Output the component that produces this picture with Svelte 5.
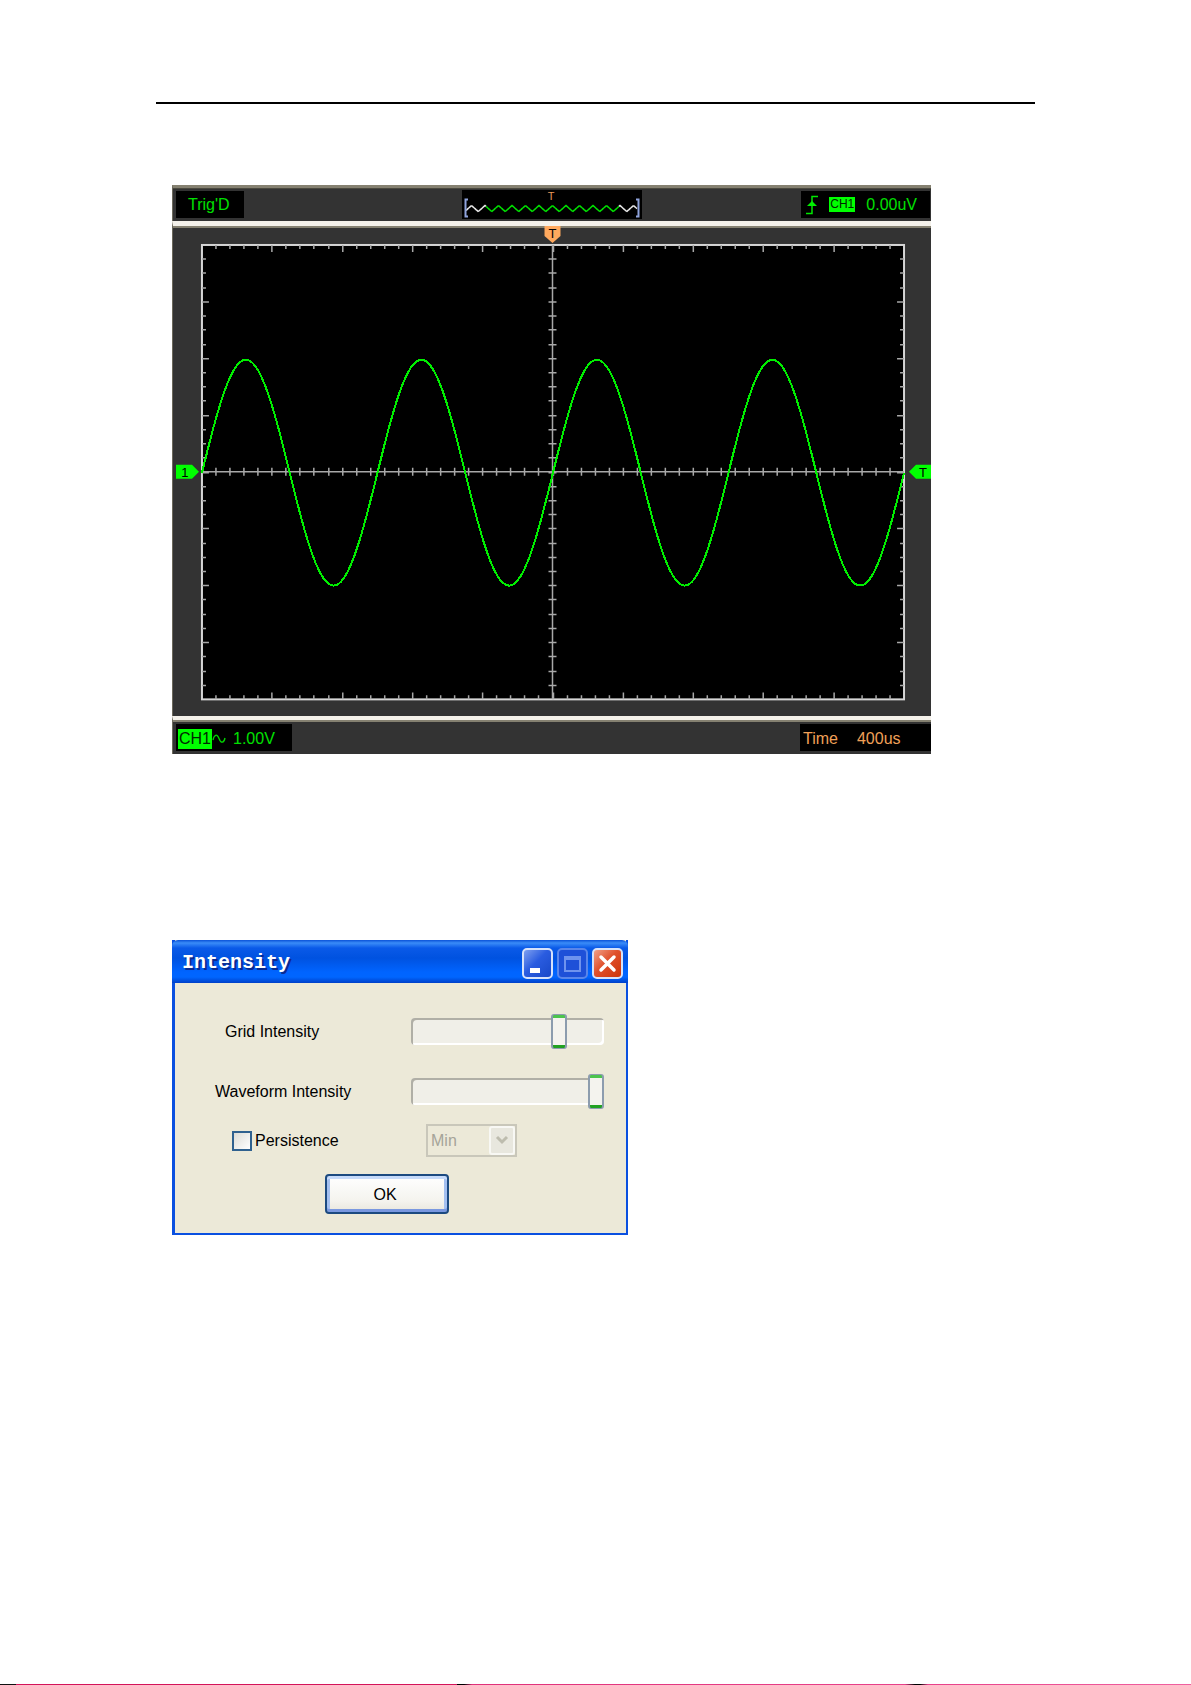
<script lang="ts">
const plot = { left: 29, top: 19, width: 703, height: 455 };
const columns = 10;
const rows = 8;
const stepX = plot.width / (columns * 5);
const stepY = plot.height / (rows * 4);
const midX = Math.floor(plot.left + plot.width / 2);
const midY = Math.floor(plot.top + plot.height / 2);
const right = plot.left + plot.width;
const bottom = plot.top + plot.height;

const ticksX = Array.from({ length: columns * 5 - 1 }, (_, i) => ({
	x: Math.round(plot.left + (i + 1) * stepX),
	size: (i + 1) % 5 === 0 ? 7 : 4,
}));
const ticksY = Array.from({ length: rows * 4 - 1 }, (_, i) => ({
	y: Math.round(plot.top + (i + 1) * stepY),
	size: (i + 1) % 4 === 0 ? 7 : 4,
}));

const amplitude = 113;
const cycles = 4;
const wave = Array.from({ length: plot.width + 1 }, (_, x) => {
	const y = midY + 1 - amplitude * Math.sin((x / plot.width) * cycles * 2 * Math.PI);
	return `${plot.left + x},${y.toFixed(1)}`;
}).join(" ");

// zigzag of the record preview, peaks every 13.5 units
function zigzag(from: number, to: number) {
	const points = [];
	for (let x = from; x <= to; x += 1) {
		const phase = (((x - 9.5) % 13.5) + 13.5) % 13.5;
		points.push(`${x},${(15.5 + Math.min(phase, 13.5 - phase) * 0.9).toFixed(1)}`);
	}
	return points.join(" ");
}

let gridIntensity = $state(79);
let waveformIntensity = $state(100);
let persistence = $state(false);
</script>

<main class="page">
	<hr class="rule" />

	<section class="scope" aria-label="Oscilloscope">
		<header class="bar">
			<div class="readout status">Trig'D</div>
			<svg class="preview" width="180" height="29" viewBox="0 0 180 29">
				<rect width="180" height="29" fill="#000" />
				<g fill="none" stroke-width="1.5">
					<polyline points={zigzag(4, 24)} stroke="#e8e8e8" />
					<polyline points={zigzag(24, 157)} stroke="#00e000" />
					<polyline points={zigzag(157, 175)} stroke="#e8e8e8" />
				</g>
				<path d="M6 9.5H3.5V26.5H6M174 9.5h2.500v17H174" fill="none" stroke="#8fa3dc" stroke-width="2" />
				<text x="89" y="10" class="preview-mark">T</text>
			</svg>
			<div class="readout trigger">
				<svg width="12" height="20" viewBox="0 0 12 20">
					<path d="M0 18.500H6V1.500H12" fill="none" stroke="#00e800" stroke-width="1.500" />
					<path d="M6 6l5 5H1z" fill="#00f000" />
				</svg>
				<span class="badge small">CH1</span>
				<span>0.00uV</span>
			</div>
		</header>

		<svg class="screen" viewBox="0 0 759 491">
			<rect x={plot.left} y={plot.top} width={plot.width} height={plot.height} fill="#000" stroke="#d6d6d6" stroke-width="2" />
			<g class="ticks">
				{#each ticksX as tick}
					<path d="M{tick.x} {plot.top}v{tick.size}M{tick.x} {bottom}v-{tick.size}M{tick.x} {midY - 4}v8" />
				{/each}
				{#each ticksY as tick}
					<path d="M{plot.left} {tick.y}h{tick.size}M{right} {tick.y}h-{tick.size}M{midX - 4} {tick.y}h8" />
				{/each}
				<path d="M{plot.left} {midY}H{right}M{midX} {plot.top}V{bottom}" />
			</g>
			<polyline class="wave" points={wave} />

			<path d="M372 0h16v10l-8 7-8-7z" fill="#ffa95e" />
			<text x="380" y="12" class="marker">T</text>
			<path d="M3 239h16l7 7-7 7H3z" fill="#00ff00" />
			<text x="12" y="251" class="marker">1</text>
			<path d="M759 239h-15l-7 7 7 7h15z" fill="#00ff00" />
			<text x="751" y="251" class="marker">T</text>
		</svg>

		<footer class="bar">
			<div class="readout channel">
				<span class="badge">CH1</span>
				<svg width="14" height="12" viewBox="0 0 14 12">
					<path d="M1 7C2 2 5 0 7 5.500S12 10 13 5" fill="none" stroke="#00d800" stroke-width="1.300" />
				</svg>
				<span class="volts">1.00V</span>
			</div>
			<div class="readout time">
				<span>Time</span>
				<span>400us</span>
			</div>
		</footer>
	</section>

	<section class="dialog" aria-labelledby="dialog-title">
		<header class="titlebar">
			<h2 id="dialog-title">Intensity</h2>
			<button class="caption" aria-label="Minimize">
				<svg viewBox="0 0 27 27"><path d="M6 18h10v5H6z" fill="#fff" /></svg>
			</button>
			<button class="caption disabled" aria-label="Maximize" disabled>
				<svg viewBox="0 0 27 27"><path d="M6 7h15v14H6zM6 9h15" fill="none" stroke="#6f93ee" stroke-width="2" /></svg>
			</button>
			<button class="caption close" aria-label="Close">
				<svg viewBox="0 0 27 27"><path d="M7 7l13 13M20 7L7 20" stroke="#fff" stroke-width="3.500" stroke-linecap="round" /></svg>
			</button>
		</header>

		<form class="settings" onsubmit={(e) => e.preventDefault()}>
			<div class="row">
				<label class="label-grid" for="grid-intensity">Grid Intensity</label>
				<input id="grid-intensity" type="range" min="0" max="100" bind:value={gridIntensity} />
			</div>
			<div class="row">
				<label class="label-wave" for="waveform-intensity">Waveform Intensity</label>
				<input id="waveform-intensity" type="range" min="0" max="100" bind:value={waveformIntensity} />
			</div>
			<div class="row compact">
				<label class="check">
					<input type="checkbox" bind:checked={persistence} />
					Persistence
				</label>
				<div class="combo">
					<select aria-label="Persistence time" disabled={!persistence}>
						<option>Min</option>
					</select>
					<span class="arrow">
						<svg width="14" height="10" viewBox="0 0 14 10"><path d="M2 2l5 5 5-5" fill="none" stroke="#bdbcae" stroke-width="3" /></svg>
					</span>
				</div>
			</div>
			<button class="ok">OK</button>
		</form>
	</section>

	<div class="edge"></div>
</main>

<style>
	:global(body) {
		background: #fff;
	}

	.page {
		box-sizing: border-box;
		display: flex;
		flex-direction: column;
		min-height: 100vh;
		padding-top: 102px;
		font-family: "Liberation Sans", Arial, sans-serif;
		font-size: 16px;
		line-height: 20px;
		color: #000;
	}

	.rule {
		height: 2px;
		margin: 0 156px 81px;
		border: none;
		background: #000;
	}

	.scope {
		box-sizing: border-box;
		width: calc(100% - 344px);
		max-width: 759px;
		margin-left: 172px;
		background: #333;
	}

	.bar {
		box-sizing: border-box;
		display: flex;
		align-items: center;
		height: 36px;
		padding-left: 3px;
		border-top: 3px solid #858171;
		border-left: 1px solid #6b685b;
		box-shadow: inset 0 1px #4a493f;
	}

	.readout {
		box-sizing: border-box;
		display: flex;
		align-items: center;
		height: 27px;
		background: #000;
		color: #00e000;
	}

	.status {
		width: 68px;
		padding-left: 12px;
	}

	.preview {
		margin: 0 auto 0 218px;
	}

	.preview-mark {
		fill: #e8995a;
		font-size: 11px;
		text-anchor: middle;
	}

	.trigger {
		gap: 11px;
		padding: 0 13px 0 5px;
		margin-right: 1px;
	}

	.badge {
		padding: 0 1px;
		background: #00ff00;
		color: #002800;
	}

	.badge.small {
		font-size: 12px;
		line-height: 15px;
	}

	.screen {
		box-sizing: border-box;
		display: block;
		width: 100%;
		border-left: 1px solid #6b685b;
		border-top: 5px solid #f4f1ea;
		box-shadow: inset 0 2px #858171;
	}

	.ticks path {
		fill: none;
		stroke: #a8a8a8;
		stroke-width: 1.5;
	}

	.wave {
		fill: none;
		stroke: #00ee00;
		stroke-width: 2;
		shape-rendering: crispEdges;
	}

	.marker {
		font-size: 13px;
		text-anchor: middle;
	}

	footer.bar {
		justify-content: space-between;
		height: 38px;
		border-top: 4px solid #f4f1ea;
		box-shadow: inset 0 2px #858171;
	}

	footer .readout {
		padding-top: 3px;
	}

	.channel {
		width: 116px;
		padding-left: 2px;
	}

	.volts {
		margin-left: 7px;
	}

	.time {
		gap: 19px;
		width: 131px;
		padding-left: 3px;
		color: #f0a058;
	}

	.dialog {
		box-sizing: border-box;
		width: 100%;
		max-width: 456px;
		margin: 186px 0 0 172px;
		border: solid #0a50e0;
		border-width: 0 2px 2px 3px;
		background: #ece9d8;
	}

	.titlebar {
		display: flex;
		align-items: center;
		gap: 4px;
		height: 43px;
		margin: 0 -2px 0 -3px;
		padding: 3px 5px 0 10px;
		box-sizing: border-box;
		border-radius: 6px 6px 0 0;
		background: linear-gradient(#0a52d8 0, #3a8cf8 3px, #0a5ae8 8px, #0052e0 18px, #0064ff 32px, #0066ff 37px, #0040c8 43px);
	}

	.titlebar h2 {
		flex: 1;
		margin: 0;
		font-family: "Liberation Mono", monospace;
		font-size: 20px;
		font-weight: 700;
		line-height: 24px;
		color: #fff;
		text-shadow: 2px 2px #0a2a90;
	}

	.caption {
		box-sizing: border-box;
		width: 31px;
		height: 31px;
		padding: 0;
		border: 2px solid #d6e2fa;
		border-radius: 5px;
		background: linear-gradient(135deg, #7ea0f0, #2a5ce0 45%, #1848c8);
	}

	.caption svg {
		display: block;
		width: 100%;
	}

	.caption.disabled {
		border-color: #5a86ea;
		background: #1e50d8;
	}

	.caption.close {
		background: linear-gradient(135deg, #f0a088, #e0502c 45%, #cc3408);
	}

	.settings {
		display: flex;
		flex-direction: column;
		padding: 18px 22px 19px 0;
	}

	.row {
		display: grid;
		grid-template-columns: 236px 1fr;
		align-items: center;
		height: 60px;
	}

	.row.compact {
		height: 38px;
	}

	.row label {
		padding-top: 2px;
	}

	.label-grid {
		padding-left: 50px;
	}

	.label-wave {
		padding-left: 40px;
	}

	.check {
		display: flex;
		align-items: center;
		gap: 3px;
		padding-left: 57px;
	}

	.check input {
		appearance: none;
		width: 20px;
		height: 20px;
		margin: 0;
		border: 2px solid #2f618f;
		background: linear-gradient(135deg, #dcdcd6, #fff);
	}

	.check input:checked {
		background: #21a121;
	}

	input[type="range"] {
		appearance: none;
		width: 100%;
		max-width: 193px;
		height: 35px;
		margin: 0;
		background: transparent;
	}

	input[type="range"]::-webkit-slider-runnable-track {
		box-sizing: border-box;
		height: 27px;
		border-radius: 4px;
		background: #f0efe8;
		box-shadow: inset 2px 2px #b0afa6, inset -2px -2px #fff;
	}

	input[type="range"]::-webkit-slider-thumb {
		appearance: none;
		box-sizing: border-box;
		width: 16px;
		height: 35px;
		margin-top: -4px;
		border: solid #8c9cae;
		border-width: 1px 2px;
		border-radius: 3px;
		background: linear-gradient(#4cc44c 3px, #f4f3ee 3px, #f4f3ee 30px, #21a121 30px);
	}

	.combo {
		position: relative;
		box-sizing: border-box;
		width: 91px;
		height: 33px;
		margin-left: 15px;
		border: 2px solid #c9c7ba;
	}

	.combo select {
		appearance: none;
		width: 100%;
		height: 100%;
		padding: 2px 3px 0;
		border: none;
		background: #ece9d8;
		font: inherit;
		color: #a5a498;
		opacity: 1;
	}

	.arrow {
		position: absolute;
		top: 0;
		right: 0;
		display: flex;
		align-items: center;
		justify-content: center;
		box-sizing: border-box;
		width: 26px;
		height: 100%;
		border: 2px solid #f8f8f4;
		border-radius: 3px;
		background: #e8e7de;
		pointer-events: none;
	}

	.ok {
		align-self: flex-start;
		width: 124px;
		height: 40px;
		margin: 15px 0 0 150px;
		padding: 2px 4px 0 0;
		border: 2px solid #1c4a80;
		border-radius: 4px;
		background: linear-gradient(#fff, #f4f3ee 70%, #e8e6dc);
		box-shadow: inset 0 3px #c6dafa, inset 0 -3px #7a98e0, inset 3px 0 #a4c0f0, inset -3px 0 #a4c0f0;
		font: inherit;
		color: #000;
	}

	.edge {
		height: 1px;
		margin-top: auto;
		background: linear-gradient(90deg, #111 16px, #d4145a 16px, #d4145a 457px, #000 457px, #000 464px, #e0307a 472px, #e8408a 905px, #000 915px, #000 920px, #e8408a 928px, #f060a0);
	}
</style>
